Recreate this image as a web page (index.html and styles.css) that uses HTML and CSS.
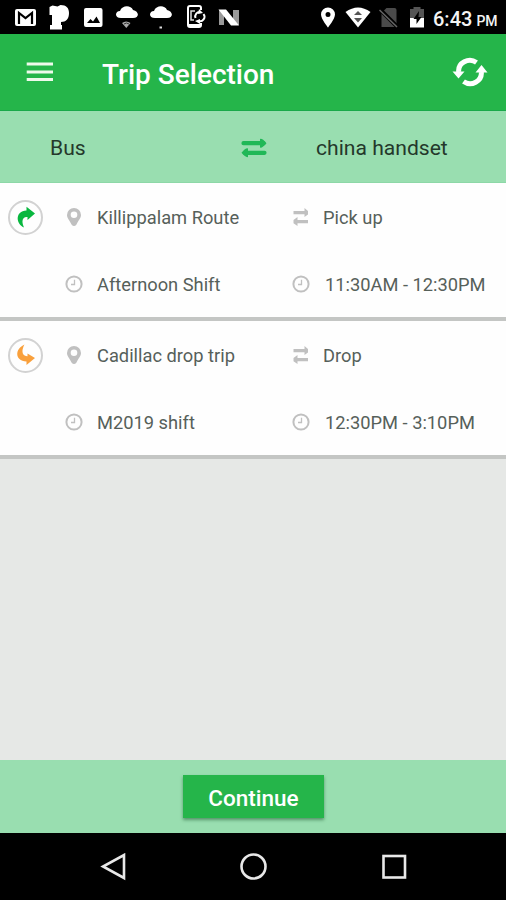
FILE: index.html
```html
<!DOCTYPE html>
<html lang="en">
<head>
<meta charset="utf-8">
<title>Trip Selection</title>
<link rel="stylesheet" href="styles.css">
</head>
<body>
<svg class="defs" width="0" height="0">
  <symbol id="pin" viewBox="0 0 16 20"><path fill-rule="evenodd" d="M8 1a7 7 0 0 0-7 7c0 3 2 4.500 4.500 9.500Q8 20.500 10.500 17.500C13 12.500 15 11 15 8a7 7 0 0 0-7-7zM8 4.500a3.300 3.300 0 1 1 0 6.600 3.300 3.300 0 0 1 0-6.600z"/></symbol>
  <symbol id="clock" viewBox="0 0 18 18"><circle cx="9" cy="9" r="7.600" fill="none" stroke="currentColor" stroke-width="2"/><path d="M9.500 4.700v4.800H6" fill="none" stroke="currentColor" stroke-width="1.300"/></symbol>
  <symbol id="swap" viewBox="0 0 18 20"><path d="M1.500 4H12.500V1L16 4v3.500l-3.500 2.500V7.300H1.500zM16 13H5.500v-3L1.500 13v3.300l4 2.700v-2.700H16z"/></symbol>
</svg>
<header class="status">
  <div class="status-left">
    <svg viewBox="13 0 25 34"><rect x="15" y="9" width="21" height="17" rx="2" fill="#fff"/><path d="M19 24V13l6.500 5 6.500-5v11" fill="none" stroke="#000" stroke-width="2.200"/></svg>
    <svg viewBox="47 0 25 34"><path fill="#fff" d="M49.500 7l3-1.500 5 1 3-1.500c6 0 8.500 3 8.500 8 0 6-3 9-8 9v3h1v4.500H50V25h2V15h-2.500z"/></svg>
    <svg viewBox="81 0 25 34"><rect x="84" y="8" width="18.500" height="19" rx="2" fill="#fff"/><path d="M87 23l3.500-4 2.500 2.500 3.500-5 3.500 6.500z" fill="#000"/></svg>
    <svg viewBox="115 0 25 34"><path fill="#fff" d="M121 18c-7 0-6-7-1-7 2-6 11-6 13-1 6 1 7 8 0 8z"/><path d="M122 23q4-3 8.500 0l-4.200 5z" fill="#aaa"/><path d="M124 24q2.500-2 5 0" fill="none" stroke="#333"/></svg>
    <svg viewBox="149 0 25 34"><path fill="#fff" d="M155 18c-7 0-6-7-1-7 2-6 11-6 13-1 6 1 7 8 0 8z"/><path d="M159.500 26.500h2.500v2h-2.500z" fill="#ddd"/></svg>
    <svg viewBox="183 0 25 34"><path d="M201 10V8q0-2-2-2h-9q-2 0-2 2v17q0 2 2 2h9q2 0 2-2v-2" fill="none" stroke="#fff" stroke-width="2"/><path d="M188 24h13v3h-13z" fill="#fff"/><path d="M194 20h-3v-9h4" fill="none" stroke="#ddd" stroke-width="1.500"/><path d="M195.500 18a4.500 4.500 0 0 1 5-6M203.500 14a4.500 4.500 0 0 1-5 7" fill="none" stroke="#fff" stroke-width="2"/><path d="M199 9l4 4-5 1zM200 24l-5-3 5-2z" fill="#fff"/></svg>
    <svg viewBox="217 0 25 34"><path d="M219 10h5v15h-5zM233 10h6v15h-6z" fill="#999"/><path d="M218.500 9.500h7.500L239 25.500h-8z" fill="#fff"/></svg>
  </div>
  <div class="status-right">
    <svg viewBox="314.500 0 26 34"><path fill="#fff" fill-rule="evenodd" d="M327.500 7.500a7 7 0 0 0-7 7c0 4.500 7 13 7 13s7-8.500 7-13a7 7 0 0 0-7-7zm0 4.400a2.500 2.500 0 1 1 0 5 2.500 2.500 0 0 1 0-5z"/></svg>
    <svg viewBox="344.500 0 26 34"><path d="M345 12q12.500-9 25 0L357.500 27.500z" fill="#fff"/><path d="M353.500 15l4-4 4 4zM353.500 18h8l-4 4.500z" fill="#555"/></svg>
    <svg viewBox="374.500 0 26 34"><path d="M386 8h8q2 0 2 2v17h-15V13z" fill="#4a4a4a"/><path d="M379 9l18 18" stroke="#000" stroke-width="4"/><path d="M379 10l17.500 17" stroke="#666" stroke-width="1.500"/></svg>
    <svg viewBox="404.500 0 26 34"><path d="M409.500 9h3.500V7h7v2h3.500v9h-14z" fill="#555"/><path d="M409.500 18h14v9.500h-14z" fill="#fff"/><path d="M418.500 11l-5.500 8h3v5l5-7h-3z" fill="#000"/></svg>
    <span class="time">6:43<small>PM</small></span>
  </div>
</header>
<div class="appbar">
  <svg class="menu" viewBox="0 0 28 20"><path d="M.7 2h26.300M.7 10h26.300M.7 17.500h26.300" stroke="#eefaeb" stroke-width="3"/></svg>
  <h1>Trip Selection</h1>
  <svg class="refresh" viewBox="0 0 36 30"><path d="M6.700 15A11.200 10.500 0 0 1 24.500 5.500" fill="none" stroke="#fff" stroke-width="5"/><path d="M29.300 15A11.200 10.500 0 0 1 11.500 24.500" fill="none" stroke="#fff" stroke-width="5"/><path d="M.5 14.500h12L6.500 21.500zM23.500 15.500L29.500 8l6 7.500z" fill="#fff"/></svg>
</div>
<div class="routebar">
  <span class="vehicle">Bus</span>
  <svg class="exchange" viewBox="0 0 26 20"><path d="M2.500 5.200h20M23.500 14.800H4" stroke="#20b857" stroke-width="4.200" stroke-linecap="round"/><path d="M19 1q2-1 6.500 4.200-4.500 5.300-6.500 4.300zM7 10.500q-2-1-6.500 4.300 4.500 5.200 6.500 4.200z" fill="#20b857"/></svg>
  <span class="device">china handset</span>
</div>
<main>
  <section class="trip">
    <div class="badge"><svg viewBox="0 0 20 22"><path fill="#08b73f" d="M8 21.500C-1.500 17 0 4.500 10.500 4.500V.8L19 7.500 11.500 14v-3C6.500 10.500 5 15 8 21.500z"/></svg></div>
    <svg class="icon pin"><use href="#pin"/></svg><span>Killippalam Route</span>
    <svg class="icon swap"><use href="#swap"/></svg><span class="kind">Pick up</span>
    <svg class="icon clock second"><use href="#clock"/></svg><span>Afternoon Shift</span>
    <svg class="icon clock"><use href="#clock"/></svg><span class="hours">11:30AM - 12:30PM</span>
  </section>
  <section class="trip">
    <div class="badge"><svg viewBox="0 0 20 22"><path fill="#f9a03c" d="M8.500.5C-1.500 5-1.500 17 10.500 17.500V21l8.500-7-7.500-4.500v2.700C6 12.500 5 7 8.500.5z"/></svg></div>
    <svg class="icon pin"><use href="#pin"/></svg><span>Cadillac drop trip</span>
    <svg class="icon swap"><use href="#swap"/></svg><span class="kind">Drop</span>
    <svg class="icon clock second"><use href="#clock"/></svg><span>M2019 shift</span>
    <svg class="icon clock"><use href="#clock"/></svg><span class="hours">12:30PM - 3:10PM</span>
  </section>
</main>
<footer><button>Continue</button></footer>
<nav>
  <svg viewBox="0 0 28 28"><path d="M24 2v23L3 13.500z"/></svg>
  <svg viewBox="0 0 28 28"><circle cx="13.500" cy="13.500" r="12"/></svg>
  <svg viewBox="0 0 28 28"><rect x="3.500" y="3" width="21.500" height="21.500"/></svg>
</nav>
</body>
</html>
```
FILE: styles.css
```css
* { box-sizing: border-box; }
body { margin: 0; width: 506px; height: 900px; display: flex; flex-direction: column; overflow: hidden; background: #e6e8e6; font-family: Roboto, "Liberation Sans", sans-serif; }
.defs { position: absolute; }
svg { display: block; flex: none; }
.status { height: 34px; background: #000; display: flex; justify-content: space-between; padding: 0 10px 0 13px; }
.status-left, .status-right { display: flex; }
.status-left { gap: 9px; }
.status-left svg { width: 25px; height: 34px; }
.status-right { gap: 4px; }
.status-right svg { width: 26px; height: 34px; }
.time { width: 63px; margin-left: -1.5px; font-size: 20px; font-weight: 500; line-height: 38px; color: #f4f4f4; white-space: nowrap; }
.time small { font-size: 14px; margin-left: 4px; }
.appbar { height: 77px; background: #25b54a; border-bottom: 1px solid #19a94a; display: flex; align-items: center; padding: 0 18px 0 26px; }
.menu { width: 28px; height: 20px; }
h1 { margin: 6px auto 0 48px; font-size: 28px; font-weight: 500; color: #fff; line-height: 36px; white-space: nowrap; }
.refresh { width: 36px; height: 30px; margin-bottom: 1px; }
.routebar { height: 72px; background: #99deb0; display: grid; grid-template-columns: 191px 75px 1fr; align-items: center; padding: 2px 0 0 50px; font-size: 21.1px; color: #24382b; border-bottom: 1px solid #8dd8a7; }
.exchange { width: 26px; height: 20px; }
main { flex: 1; }
.trip { height: 138px; background: #fefefe; border-bottom: 4px solid #c4c6c4; display: grid; grid-template-columns: 51px 46px 195px 31px 1fr; grid-template-rows: 68px 66px; align-items: center; font-size: 18.3px; color: #56605a; white-space: nowrap; }
.trip > .second { grid-column: 2; }
.badge { width: 35px; height: 35px; margin-left: 8px; border: 2px solid #d2d2d2; border-radius: 50%; display: flex; align-items: center; justify-content: center; }
.badge svg { width: 20px; height: 22px; }
.icon { fill: #c0c0c0; color: #c0c0c0; }
.pin { width: 16px; height: 20px; margin-left: 15px; }
.clock { width: 18px; height: 18px; }
.second { margin-left: 14px; }
.swap { width: 18px; height: 20px; }
.hours { padding-left: 2px; }
footer { height: 73px; background: #99deb0; display: flex; justify-content: center; align-items: flex-start; padding-top: 15px; }
button { width: 141px; height: 43px; border: 0; padding: 2px 0 0 1px; background: #25b54a; color: #fff; font: 500 22.5px Roboto, sans-serif; box-shadow: 0 2px 3px rgba(30,90,50,.55); }
nav { height: 67px; background: #000; display: flex; justify-content: space-between; align-items: center; padding: 0 98px 0 100px; }
nav svg { width: 28px; height: 28px; fill: none; stroke: #e8e8e8; stroke-width: 2.6; }
```
